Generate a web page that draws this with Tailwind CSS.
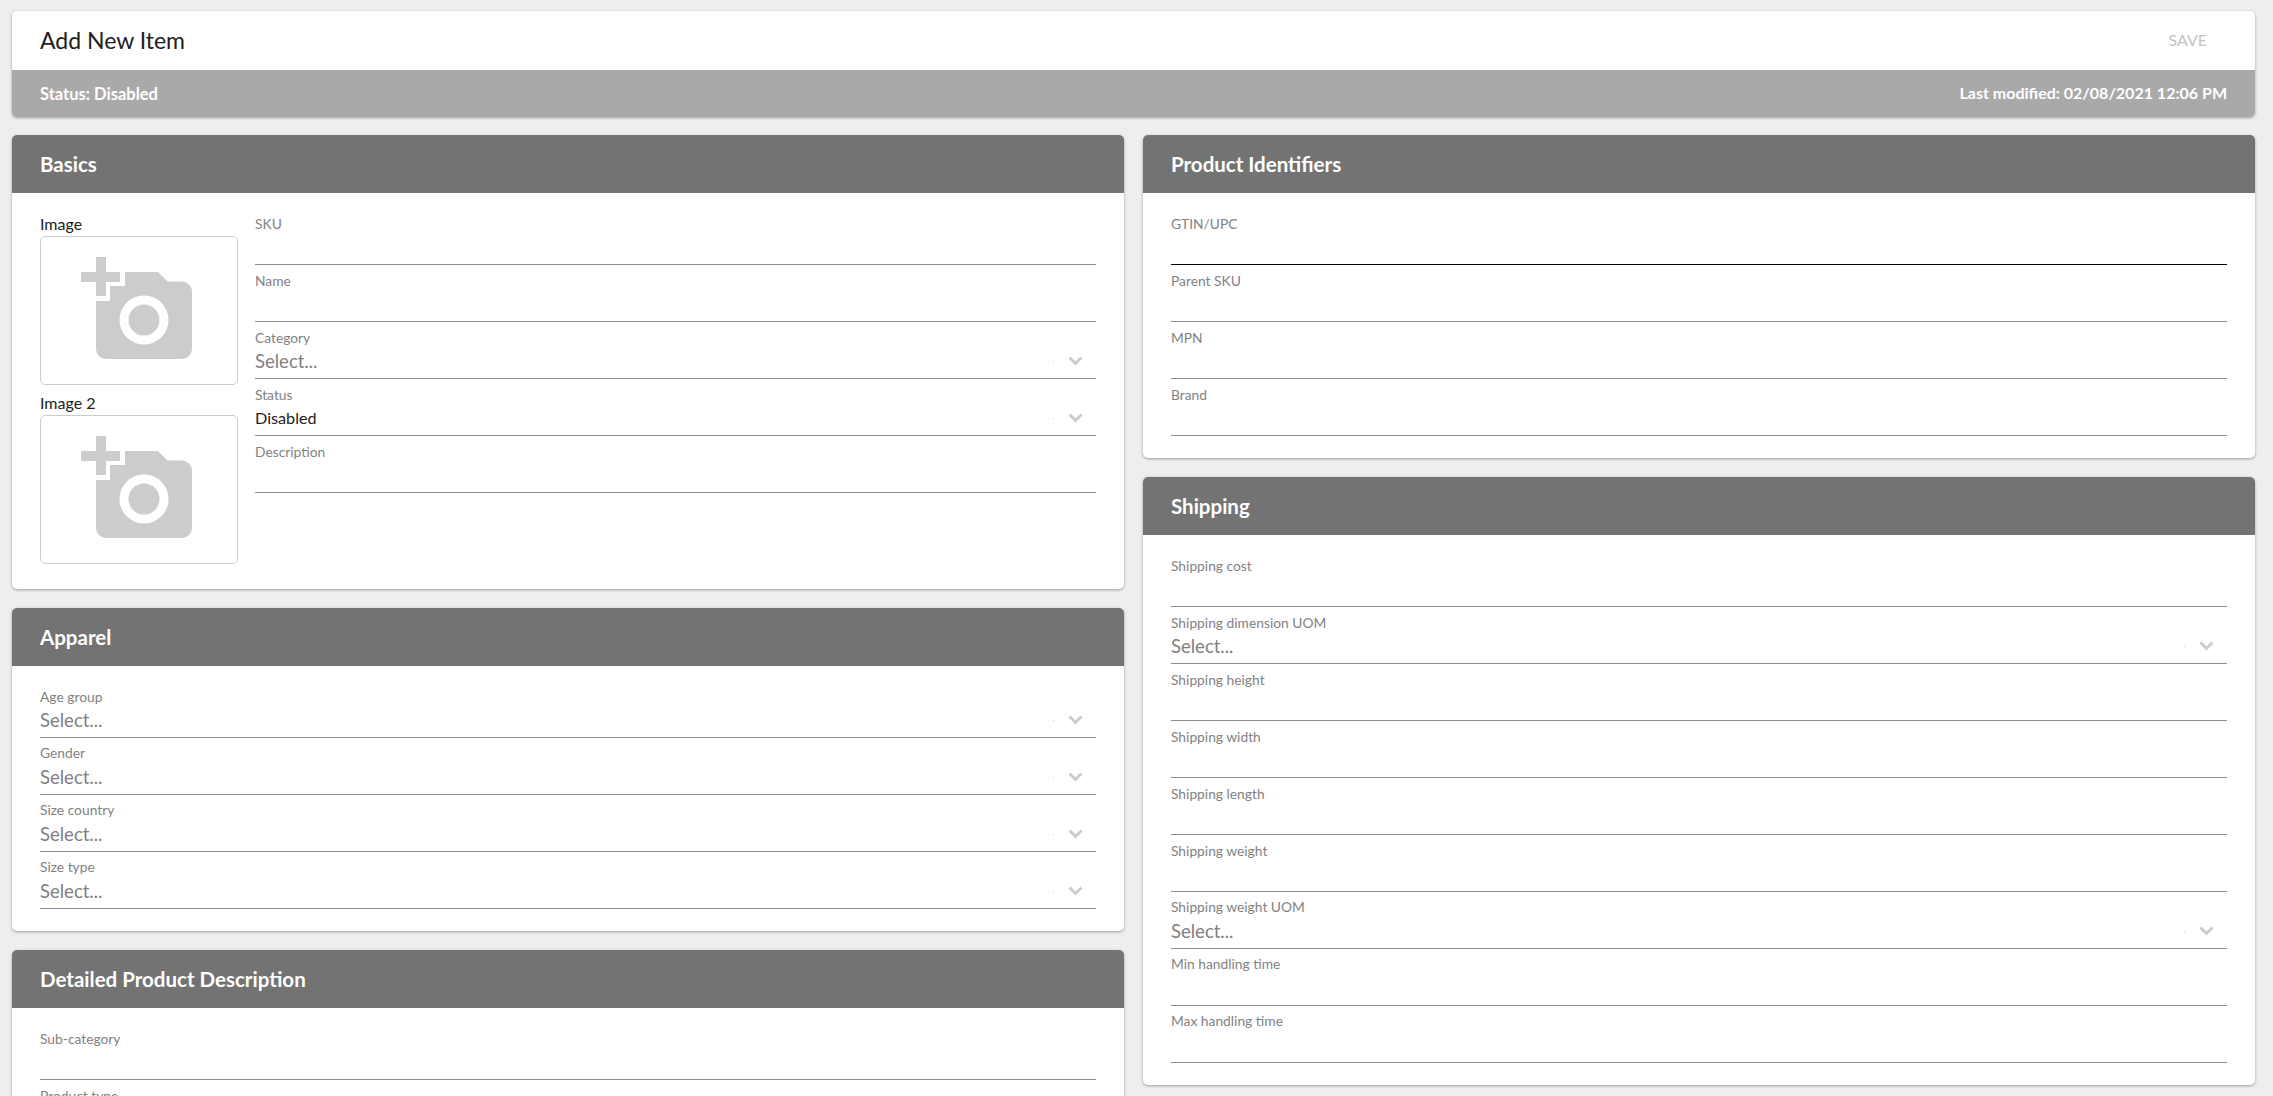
<!DOCTYPE html>
<html lang="en">
<head>
<meta charset="utf-8">
<title>Add New Item</title>
<script src="https://cdn.jsdelivr.net/npm/@tailwindcss/browser@4"></script>
</head>
<body class="bg-[#eeeeee] h-screen overflow-hidden font-['Lato',sans-serif] text-[#212121]">
<main class="pt-[11px] pl-[12px] pr-[18px]">
  <section class="rounded-[5px] overflow-hidden shadow-[0_1px_3px_rgba(0,0,0,0.35)]">
    <div class="h-[59px] bg-white flex items-center justify-between pl-[28px] pr-[48px]">
      <h1 class="text-[23px] leading-none font-normal">Add New Item</h1>
      <span class="text-[16px] text-[#c2c2c2] pb-[2px]">SAVE</span>
    </div>
    <div class="h-[47px] bg-[#a9a9a9] flex items-center justify-between px-[28px] pb-[2px] text-white text-[16px] font-bold">
      <span class="text-[16.500px] leading-[24px] mt-[2px]">Status: Disabled</span>
      <span class="leading-[24px]">Last modified: 02/08/2021 12:06 PM</span>
    </div>
  </section>

  <div class="grid grid-cols-2 gap-x-[19px] mt-[18px] items-start">
    <div class="flex flex-col gap-[19px]">
      <section class="bg-white rounded-[5px] overflow-hidden shadow-[0_1px_3px_rgba(0,0,0,0.35)]">
        <h2 class="h-[58px] bg-[#737373] text-white text-[20.500px] font-bold flex items-center px-[28px]">Basics</h2>
        <div class="h-[396px] flex px-[28px] pt-[15px] gap-[17px]">
          <div class="w-[198px] shrink-0 text-[16px] leading-[18px]">
            <div class="h-[28px] pt-[7px] leading-[18px]">Image</div>
            <div class="h-[149px] rounded-[5px] border border-[#cccccc]">
              <svg class="w-[196px] h-[146px]" viewBox="41 237 196 146"><path fill="#cccccc" d="M81 272h15v-15h10v15h14v10h-14v14h-10v-14H81zM125 272h33l9.500 9.500H182a10 10 0 0 1 10 10V349a10 10 0 0 1-10 10H106a10 10 0 0 1-10-10V301h14v-15h15z"/><circle cx="144" cy="320" r="24.500" fill="#ffffff"/><circle cx="144" cy="320" r="15.500" fill="#cccccc"/></svg>
            </div>
            <div class="h-[30px] pt-[9px] leading-[18px]">Image 2</div>
            <div class="h-[149px] rounded-[5px] border border-[#cccccc]">
              <svg class="w-[196px] h-[146px]" viewBox="41 237 196 146"><path fill="#cccccc" d="M81 272h15v-15h10v15h14v10h-14v14h-10v-14H81zM125 272h33l9.500 9.500H182a10 10 0 0 1 10 10V349a10 10 0 0 1-10 10H106a10 10 0 0 1-10-10V301h14v-15h15z"/><circle cx="144" cy="320" r="24.500" fill="#ffffff"/><circle cx="144" cy="320" r="15.500" fill="#cccccc"/></svg>
            </div>
          </div>
          <div class="flex-1 min-w-0">
            <div class="h-[57px] border-b border-[#8e8e8e] pt-[8px]"><div class="text-[13.800px] leading-[16px] text-[#828282]">SKU</div></div>
            <div class="h-[57px] border-b border-[#8e8e8e] pt-[8px]"><div class="text-[13.800px] leading-[16px] text-[#828282]">Name</div></div>
            <div class="h-[57px] border-b border-[#8e8e8e] pt-[8px] relative"><div class="text-[13.800px] leading-[16px] text-[#828282]">Category</div><div class="text-[18.500px] leading-[22px] mt-[4px] text-[#808080]">Select...</div><svg class="absolute right-[13px] top-[34px] w-[15px] h-[10px]" viewBox="0 0 15 10"><path d="M1.500 1.500l6 6 6-6" fill="none" stroke="#cccccc" stroke-width="3"/></svg><span class="absolute right-[42px] top-[39px] w-px h-px bg-[#cccccc]"></span></div>
            <div class="h-[57px] border-b border-[#8e8e8e] pt-[8px] relative"><div class="text-[13.800px] leading-[16px] text-[#828282]">Status</div><div class="text-[16.200px] leading-[22px] mt-[4px] text-[#212121]">Disabled</div><svg class="absolute right-[13px] top-[34px] w-[15px] h-[10px]" viewBox="0 0 15 10"><path d="M1.500 1.500l6 6 6-6" fill="none" stroke="#cccccc" stroke-width="3"/></svg><span class="absolute right-[42px] top-[39px] w-px h-px bg-[#cccccc]"></span></div>
            <div class="h-[57px] border-b border-[#8e8e8e] pt-[8px]"><div class="text-[13.800px] leading-[16px] text-[#828282]">Description</div></div>
          </div>
        </div>
      </section>

      <section class="bg-white rounded-[5px] overflow-hidden shadow-[0_1px_3px_rgba(0,0,0,0.35)]">
        <h2 class="h-[58px] bg-[#737373] text-white text-[20.500px] font-bold flex items-center px-[28px]">Apparel</h2>
        <div class="px-[28px] pt-[15px] pb-[22px]">
          <div class="h-[57px] border-b border-[#8e8e8e] pt-[8px] relative"><div class="text-[13.800px] leading-[16px] text-[#828282]">Age group</div><div class="text-[18.500px] leading-[22px] mt-[4px] text-[#808080]">Select...</div><svg class="absolute right-[13px] top-[34px] w-[15px] h-[10px]" viewBox="0 0 15 10"><path d="M1.500 1.500l6 6 6-6" fill="none" stroke="#cccccc" stroke-width="3"/></svg><span class="absolute right-[42px] top-[39px] w-px h-px bg-[#cccccc]"></span></div>
          <div class="h-[57px] border-b border-[#8e8e8e] pt-[7px] relative"><div class="text-[13.800px] leading-[16px] text-[#828282]">Gender</div><div class="text-[18.500px] leading-[22px] mt-[5px] text-[#808080]">Select...</div><svg class="absolute right-[13px] top-[34px] w-[15px] h-[10px]" viewBox="0 0 15 10"><path d="M1.500 1.500l6 6 6-6" fill="none" stroke="#cccccc" stroke-width="3"/></svg><span class="absolute right-[42px] top-[39px] w-px h-px bg-[#cccccc]"></span></div>
          <div class="h-[57px] border-b border-[#8e8e8e] pt-[7px] relative"><div class="text-[13.800px] leading-[16px] text-[#828282]">Size country</div><div class="text-[18.500px] leading-[22px] mt-[5px] text-[#808080]">Select...</div><svg class="absolute right-[13px] top-[34px] w-[15px] h-[10px]" viewBox="0 0 15 10"><path d="M1.500 1.500l6 6 6-6" fill="none" stroke="#cccccc" stroke-width="3"/></svg><span class="absolute right-[42px] top-[39px] w-px h-px bg-[#cccccc]"></span></div>
          <div class="h-[57px] border-b border-[#8e8e8e] pt-[7px] relative"><div class="text-[13.800px] leading-[16px] text-[#828282]">Size type</div><div class="text-[18.500px] leading-[22px] mt-[5px] text-[#808080]">Select...</div><svg class="absolute right-[13px] top-[34px] w-[15px] h-[10px]" viewBox="0 0 15 10"><path d="M1.500 1.500l6 6 6-6" fill="none" stroke="#cccccc" stroke-width="3"/></svg><span class="absolute right-[42px] top-[39px] w-px h-px bg-[#cccccc]"></span></div>
        </div>
      </section>

      <section class="bg-white rounded-[5px] overflow-hidden shadow-[0_1px_3px_rgba(0,0,0,0.35)]">
        <h2 class="h-[58px] bg-[#737373] text-white text-[20.500px] font-bold flex items-center px-[28px]">Detailed Product Description</h2>
        <div class="px-[28px] pt-[15px] pb-[22px]">
          <div class="h-[57px] border-b border-[#8e8e8e] pt-[8px]"><div class="text-[13.800px] leading-[16px] text-[#828282]">Sub-category</div></div>
          <div class="h-[57px] border-b border-[#8e8e8e] pt-[8px]"><div class="text-[13.800px] leading-[16px] text-[#828282]">Product type</div></div>
        </div>
      </section>
    </div>

    <div class="flex flex-col gap-[19px]">
      <section class="bg-white rounded-[5px] overflow-hidden shadow-[0_1px_3px_rgba(0,0,0,0.35)]">
        <h2 class="h-[58px] bg-[#737373] text-white text-[20.500px] font-bold flex items-center px-[28px]">Product Identifiers</h2>
        <div class="px-[28px] pt-[15px] pb-[22px]">
          <div class="h-[57px] border-b border-black pt-[8px]"><div class="text-[13.800px] leading-[16px] text-[#828282]">GTIN/UPC</div></div>
          <div class="h-[57px] border-b border-[#8e8e8e] pt-[8px]"><div class="text-[13.800px] leading-[16px] text-[#828282]">Parent SKU</div></div>
          <div class="h-[57px] border-b border-[#8e8e8e] pt-[8px]"><div class="text-[13.800px] leading-[16px] text-[#828282]">MPN</div></div>
          <div class="h-[57px] border-b border-[#8e8e8e] pt-[8px]"><div class="text-[13.800px] leading-[16px] text-[#828282]">Brand</div></div>
        </div>
      </section>

      <section class="bg-white rounded-[5px] overflow-hidden shadow-[0_1px_3px_rgba(0,0,0,0.35)]">
        <h2 class="h-[58px] bg-[#737373] text-white text-[20.500px] font-bold flex items-center px-[28px]">Shipping</h2>
        <div class="px-[28px] pt-[15px] pb-[22px]">
          <div class="h-[57px] border-b border-[#8e8e8e] pt-[8px]"><div class="text-[13.800px] leading-[16px] text-[#828282]">Shipping cost</div></div>
          <div class="h-[57px] border-b border-[#8e8e8e] pt-[8px] relative"><div class="text-[13.800px] leading-[16px] text-[#828282]">Shipping dimension UOM</div><div class="text-[18.500px] leading-[22px] mt-[4px] text-[#808080]">Select...</div><svg class="absolute right-[13px] top-[34px] w-[15px] h-[10px]" viewBox="0 0 15 10"><path d="M1.500 1.500l6 6 6-6" fill="none" stroke="#cccccc" stroke-width="3"/></svg><span class="absolute right-[42px] top-[39px] w-px h-px bg-[#cccccc]"></span></div>
          <div class="h-[57px] border-b border-[#8e8e8e] pt-[8px]"><div class="text-[13.800px] leading-[16px] text-[#828282]">Shipping height</div></div>
          <div class="h-[57px] border-b border-[#8e8e8e] pt-[8px]"><div class="text-[13.800px] leading-[16px] text-[#828282]">Shipping width</div></div>
          <div class="h-[57px] border-b border-[#8e8e8e] pt-[8px]"><div class="text-[13.800px] leading-[16px] text-[#828282]">Shipping length</div></div>
          <div class="h-[57px] border-b border-[#8e8e8e] pt-[8px]"><div class="text-[13.800px] leading-[16px] text-[#828282]">Shipping weight</div></div>
          <div class="h-[57px] border-b border-[#8e8e8e] pt-[7px] relative"><div class="text-[13.800px] leading-[16px] text-[#828282]">Shipping weight UOM</div><div class="text-[18.500px] leading-[22px] mt-[5px] text-[#808080]">Select...</div><svg class="absolute right-[13px] top-[34px] w-[15px] h-[10px]" viewBox="0 0 15 10"><path d="M1.500 1.500l6 6 6-6" fill="none" stroke="#cccccc" stroke-width="3"/></svg><span class="absolute right-[42px] top-[39px] w-px h-px bg-[#cccccc]"></span></div>
          <div class="h-[57px] border-b border-[#8e8e8e] pt-[7px]"><div class="text-[13.800px] leading-[16px] text-[#828282]">Min handling time</div></div>
          <div class="h-[57px] border-b border-[#8e8e8e] pt-[7px]"><div class="text-[13.800px] leading-[16px] text-[#828282]">Max handling time</div></div>
        </div>
      </section>
    </div>
  </div>
</main>
</body>
</html>
